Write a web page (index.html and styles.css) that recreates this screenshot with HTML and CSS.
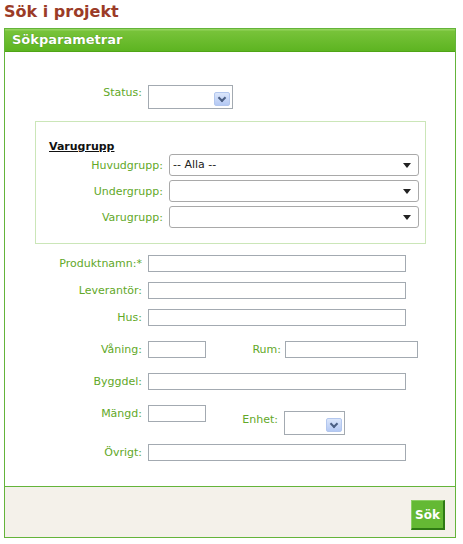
FILE: index.html
```html
<!DOCTYPE html>
<html lang="sv">
<head>
  <meta charset="UTF-8">
  <title>Sök i projekt</title>
  <link rel="stylesheet" href="styles.css">
</head>
<body>

  <h1 class="page-title">Sök i projekt</h1>

  <div class="panel">
    <div class="panel-head">Sökparametrar</div>

    <div class="panel-body">
      <div class="row row-status">
        <label class="lbl">Status:</label>
        <span class="combo combo-status"><span class="combo-btn"></span></span>
      </div>

      <div class="group">
        <div class="group-title">Varugrupp</div>
        <div class="group-row">
          <label class="glbl">Huvudgrupp:</label>
          <span class="dropdown">-- Alla --</span>
        </div>
        <div class="group-row">
          <label class="glbl">Undergrupp:</label>
          <span class="dropdown"></span>
        </div>
        <div class="group-row">
          <label class="glbl">Varugrupp:</label>
          <span class="dropdown"></span>
        </div>
      </div>

      <div class="row row-first">
        <label class="lbl">Produktnamn:*</label>
        <input type="text" class="txt txt-wide">
      </div>
      <div class="row row-tight">
        <label class="lbl">Leverantör:</label>
        <input type="text" class="txt txt-wide">
      </div>
      <div class="row row-tight">
        <label class="lbl">Hus:</label>
        <input type="text" class="txt txt-wide">
      </div>
      <div class="row row-loose">
        <label class="lbl">Våning:</label>
        <input type="text" class="txt txt-small">
        <label class="lbl2">Rum:</label>
        <input type="text" class="txt txt-rum">
      </div>
      <div class="row row-loose">
        <label class="lbl">Byggdel:</label>
        <input type="text" class="txt txt-wide">
      </div>
      <div class="row row-loose row-top">
        <label class="lbl">Mängd:</label>
        <input type="text" class="txt txt-small">
        <label class="lbl2 lbl-enhet">Enhet:</label>
        <span class="combo combo-enhet"><span class="combo-btn"></span></span>
      </div>
      <div class="row row-last">
        <label class="lbl">Övrigt:</label>
        <input type="text" class="txt txt-wide">
      </div>
    </div>

    <div class="panel-foot">
      <button class="search-btn">Sök</button>
    </div>
  </div>

</body>
</html>
```

FILE: styles.css
```css
body {
  margin: 0;
  font-family: "DejaVu Sans", Verdana, sans-serif;
  font-size: 11px;
  color: #333;
  background: #fff;
}
.page-title {
  margin: 0;
  padding-left: 4px;
  height: 28px;
  line-height: 23px;
  font-size: 16px;
  font-weight: bold;
  color: #9b3b27;
}
.panel {
  margin-left: 4px;
  width: 450px;
  border: 1px solid #64b43a;
}
.panel-head {
  height: 22px;
  line-height: 22px;
  padding-left: 7px;
  font-size: 13px;
  font-weight: bold;
  color: #fff;
  text-shadow: 0 0 1px #3c7a14;
  background: linear-gradient(#93d35c 0, #93d35c 1px, #78c33a 2px, #5db421 100%);
  border-bottom: 1px solid #4fa516;
}
.panel-body {
  padding: 33px 0 25px;
}
.row {
  display: flex;
  align-items: center;
}
.lbl {
  width: 137px;
  margin-right: 6px;
  text-align: right;
  color: #62a828;
}
.lbl2 {
  width: 75px;
  margin-right: 4px;
  text-align: right;
  color: #62a828;
}
.row-status {
  align-items: flex-start;
}
.row-status .lbl {
  padding-top: 1px;
}
.row-top {
  align-items: flex-start;
}
.row-top .lbl {
  padding-top: 2px;
}
.lbl-enhet {
  width: 72px;
  margin-right: 6px;
  padding-top: 8px;
}
.row-first { margin-top: 11px; }
.row-tight { margin-top: 10px; }
.row-loose { margin-top: 15px; }
.row-last { margin-top: 9px; }

.txt {
  box-sizing: border-box;
  height: 17px;
  margin: 0;
  padding: 0 2px;
  border: 1px solid #a3aab1;
  font: inherit;
  background: #fff;
}
.txt-wide { width: 258px; }
.txt-small { width: 58px; }
.txt-rum { width: 133px; }

.combo {
  box-sizing: border-box;
  position: relative;
  display: inline-block;
  height: 24px;
  border: 1px solid #a3aab1;
  background: #fff;
}
.combo-status { width: 85px; }
.combo-enhet { width: 61px; margin-top: 6px; }
.combo-btn {
  box-sizing: border-box;
  position: absolute;
  right: 2px;
  top: 6px;
  width: 16px;
  height: 14px;
  border: 1px solid #b3c7ee;
  border-radius: 2px;
  background: linear-gradient(#dbe6fb, #b4c9f4);
}
.combo-btn::after {
  content: "";
  position: absolute;
  left: 4px;
  top: 2px;
  width: 4px;
  height: 4px;
  border-right: 2px solid #4b5f84;
  border-bottom: 2px solid #4b5f84;
  transform: rotate(45deg);
}

.group {
  box-sizing: border-box;
  width: 391px;
  height: 123px;
  margin: 12px 0 0 30px;
  padding: 18px 0 0 13px;
  border: 1px solid #cbe6b8;
}
.group-title {
  font-weight: bold;
  text-decoration: underline;
  color: #111;
  line-height: 14px;
}
.group-row {
  display: flex;
  align-items: center;
  margin-bottom: 4px;
}
.glbl {
  width: 114px;
  margin-right: 6px;
  text-align: right;
  color: #62a828;
}
.dropdown {
  box-sizing: border-box;
  position: relative;
  width: 250px;
  height: 22px;
  line-height: 20px;
  padding-left: 3px;
  border: 1px solid #a9a9a9;
  border-radius: 3px;
  background: #fff;
  color: #222;
}
.dropdown::after {
  content: "";
  position: absolute;
  right: 7px;
  top: 8px;
  border-left: 4px solid transparent;
  border-right: 4px solid transparent;
  border-top: 5px solid #222;
}

.panel-foot {
  display: flex;
  justify-content: flex-end;
  height: 51px;
  padding: 13px 10px 0 0;
  box-sizing: border-box;
  background: #f4f1ea;
  border-top: 1px solid #64b43a;
}
.search-btn {
  box-sizing: border-box;
  width: 34px;
  height: 30px;
  padding: 0;
  font-family: inherit;
  font-size: 12px;
  font-weight: bold;
  color: #fff;
  background: #64b934;
  border: 1px solid #64b934;
  border-top-color: #8ccf64;
  border-left-color: #8ccf64;
  border-right: 2px solid #2e7a14;
  border-bottom: 2px solid #2e7a14;
  cursor: pointer;
}
```
